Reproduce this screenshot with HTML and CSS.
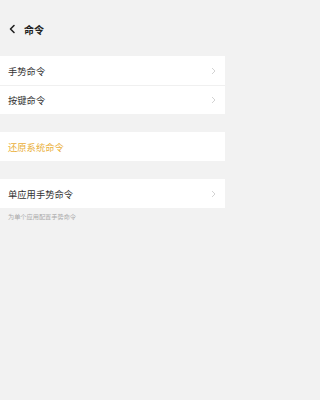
FILE: index.html
```html
<!DOCTYPE html>
<html lang="zh">
<head>
<meta charset="utf-8">
<link rel="stylesheet" href="styles.css">
</head>
<body>
<div class="page">
  <header class="header">
    <svg class="back" width="8" height="10" viewBox="0 0 8 10"><path d="M6 1.5 L2.5 5 L6 8.5" fill="none" stroke="#222" stroke-width="1.6" stroke-linecap="round" stroke-linejoin="round"/></svg>
    <span class="title">命令</span>
  </header>
  <section class="card">
    <div class="row"><span class="label">手势命令</span><svg class="chev" width="5" height="8" viewBox="0 0 5 8"><path d="M1 1 L4 4 L1 7" fill="none" stroke="#c8c8c8" stroke-width="0.8"/></svg></div>
    <div class="row"><span class="label">按键命令</span><svg class="chev" width="5" height="8" viewBox="0 0 5 8"><path d="M1 1 L4 4 L1 7" fill="none" stroke="#c8c8c8" stroke-width="0.8"/></svg></div>
  </section>
  <section class="card gap">
    <div class="row"><span class="label orange">还原系统命令</span></div>
  </section>
  <section class="card gap">
    <div class="row"><span class="label">单应用手势命令</span><svg class="chev" width="5" height="8" viewBox="0 0 5 8"><path d="M1 1 L4 4 L1 7" fill="none" stroke="#c8c8c8" stroke-width="0.8"/></svg></div>
  </section>
  <p class="caption">为单个应用配置手势命令</p>
</div>
</body>
</html>
```
FILE: styles.css
```css
html, body {
  margin: 0;
  padding: 0;
  background: #f2f2f2;
}
.page {
  font-family: "Noto Sans CJK SC", "Noto Sans", sans-serif;
  width: 225px;
  min-height: 400px;
  background: #f2f2f2;
}
.header {
  height: 56px;
  display: flex;
  align-items: center;
  padding: 2px 0 0 8px;
  box-sizing: border-box;
}
.back {
  display: block;
}
.title {
  margin-left: 8px;
  font-size: 10px;
  font-weight: 700;
  color: #222;
}
.card {
  background: #fff;
}
.card.gap {
  margin-top: 18px;
}
.row {
  height: 29px;
  display: flex;
  align-items: center;
  justify-content: space-between;
  padding: 0 9px 0 8px;
  box-sizing: border-box;
}
.row + .row {
  border-top: 0.5px solid #f0f0f0;
}
.label {
  font-size: 9.3px;
  color: #333;
}
.label.orange {
  color: #eab03a;
}
.chev {
  display: block;
}
.caption {
  margin: 0;
  padding: 4px 8px 0;
  font-size: 6.2px;
  color: #aaa;
}
```
